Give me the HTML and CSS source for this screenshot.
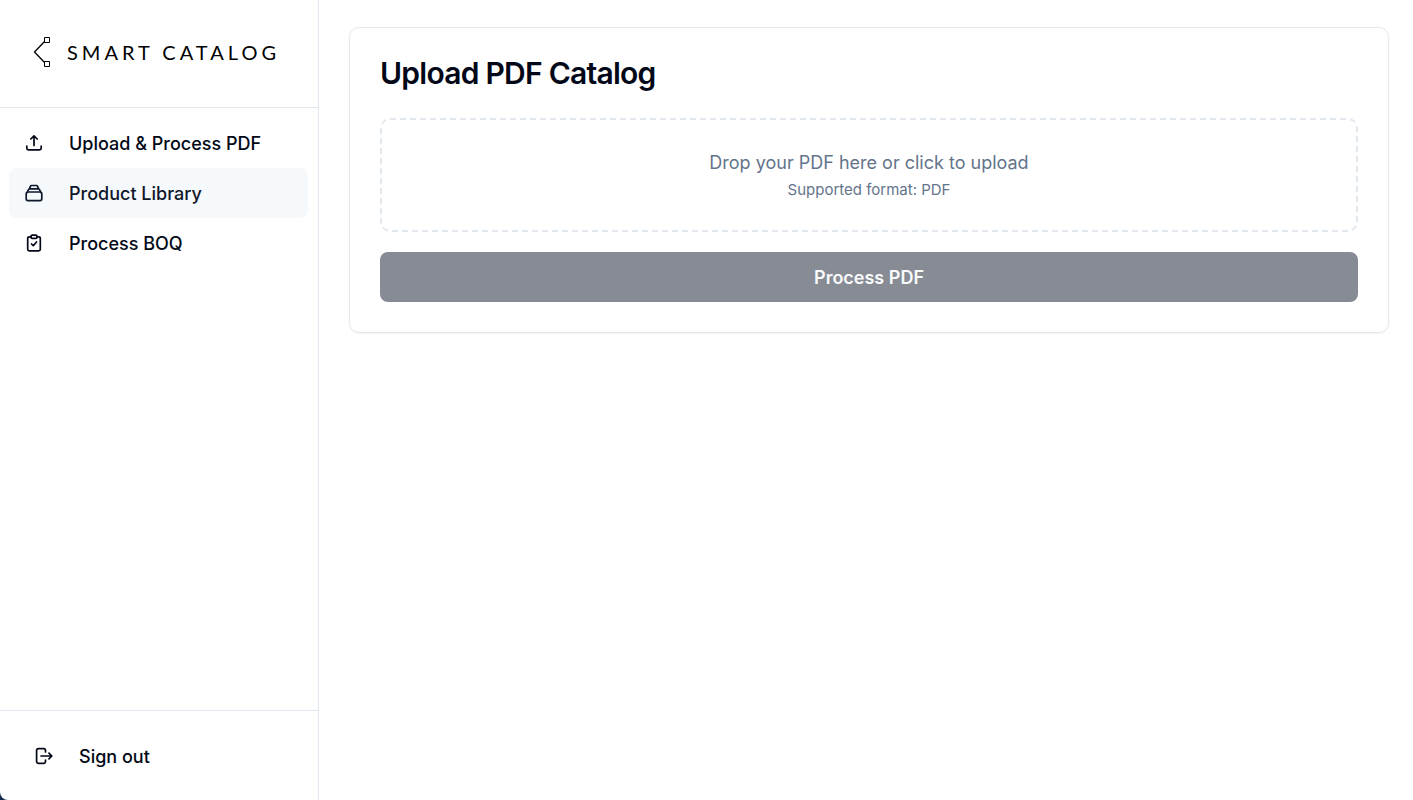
FILE: index.html
```html
<!DOCTYPE html>
<html lang="en">
<head>
<meta charset="utf-8">
<meta name="viewport" content="width=device-width, initial-scale=1">
<title>Smart Catalog</title>
<link rel="stylesheet" href="styles.css">
</head>
<body>
<div class="app">
  <aside class="sidebar">
    <div class="brand">
      <svg class="brand-mark" width="17" height="32" viewBox="0 0 17 32" fill="none" stroke="#000" aria-hidden="true">
        <path d="M11.500 5.500L1.500 16L11.500 26.500" stroke-width="1.300"/>
        <path d="M11.500 1.500h5v5h-5zM11.500 25.500h5v5h-5z"/>
      </svg>
      <span class="brand-name">SMART CATALOG</span>
    </div>
    <nav class="nav">
      <a class="nav-item" href="#upload">
        <svg class="icon" viewBox="0 0 18 18" aria-hidden="true"><path d="M9 11.500V2M5.800 5L9 1.800L12.200 5M1.800 12v2.200q0 1.600 1.600 1.600h11.200q1.600 0 1.600-1.600V12"/></svg>
        <span class="label">Upload &amp; Process PDF</span>
      </a>
      <a class="nav-item active" href="#library">
        <svg class="icon" viewBox="0 0 18 18" aria-hidden="true"><rect x="1.200" y="8" width="15.600" height="8.600" rx="1.800"/><path d="M2.100 8.500L3.500 5.600Q3.900 4.800 4.800 4.800h8.400q.9 0 1.300.8l1.400 2.900M4.600 4.600L5.400 2.400Q5.700 1.500 6.600 1.500h4.800q.9 0 1.200.9l.8 2.200"/></svg>
        <span class="label">Product Library</span>
      </a>
      <a class="nav-item" href="#boq">
        <svg class="icon" viewBox="0 0 18 18" aria-hidden="true"><path d="M6 2.800H4.300Q2.700 2.800 2.700 4.400v10.800q0 1.600 1.600 1.600h9.400q1.600 0 1.600-1.600V4.400q0-1.600-1.600-1.600H12M6.500 10l1.800 1.700L11.500 8"/><rect x="6" y="1.200" width="6" height="3.200" rx="1.200"/></svg>
        <span class="label">Process BOQ</span>
      </a>
    </nav>
    <div class="account">
      <button class="sign-out" type="button">
        <svg class="icon" viewBox="0 0 18 18" aria-hidden="true"><path d="M10.500 5V3.400q0-1.700-1.700-1.700H3.500q-1.900 0-1.900 1.900v10.800q0 1.900 1.900 1.900h5.300q1.700 0 1.700-1.700V13M6 9h10.800M14 6.200L16.800 9L14 11.800"/></svg>
        <span class="label">Sign out</span>
      </button>
    </div>
  </aside>
  <main class="content">
    <section class="card">
      <h1 class="title">Upload PDF Catalog</h1>
      <button class="dropzone" type="button">
        <span class="drop-main">Drop your PDF here or click to upload</span>
        <span class="drop-hint">Supported format: PDF</span>
      </button>
      <button class="process" type="button" disabled><span class="label">Process PDF</span></button>
    </section>
  </main>
</div>
</body>
</html>
```
FILE: styles.css
```css
* {
  box-sizing: border-box;
}

body {
  margin: 0;
  background: #0f294f;
  color: #020817;
  font-family: Inter, "Liberation Sans", sans-serif;
  font-size: 18px;
  line-height: 26px;
}

button {
  font: inherit;
  color: inherit;
}

.app {
  display: flex;
  min-height: 100vh;
  background: #fff;
  border-bottom-left-radius: 8px;
}

.sidebar {
  display: flex;
  flex-direction: column;
  flex: 0 0 319px;
  border-right: 1px solid #e2e8f0;
}

.brand {
  display: flex;
  align-items: center;
  gap: 17px;
  height: 108px;
  padding: 0 33px 4px;
  border-bottom: 1px solid #e2e8f0;
}

.brand-mark {
  flex: none;
}

.brand-name {
  color: #000;
  font-family: Lato, sans-serif;
  font-size: 20px;
  letter-spacing: 4px;
  white-space: nowrap;
}

.nav {
  flex: 1;
  padding: 10px 10px 10px 9px;
}

.nav-item {
  display: flex;
  align-items: center;
  gap: 26px;
  height: 50px;
  padding: 0 16px;
  border-radius: 8px;
  color: inherit;
  font-weight: 500;
  text-decoration: none;
}

.nav-item.active {
  background: #f5f9fc;
  color: #0f172a;
}

.label {
  display: block;
  padding-top: 2px;
}

.icon {
  flex: none;
  width: 18px;
  height: 18px;
  fill: none;
  stroke: currentColor;
  stroke-width: 1.7;
  stroke-linecap: round;
  stroke-linejoin: round;
}

.account {
  padding: 20px 20px 19px;
  border-top: 1px solid #e2e8f0;
}

.sign-out {
  display: flex;
  align-items: center;
  gap: 26px;
  width: 100%;
  height: 50px;
  padding: 0 15px;
  border: 0;
  background: none;
  font-weight: 500;
}

.content {
  flex: 1;
  min-width: 0;
  padding: 27px 24px 27px 30px;
}

.card {
  display: flex;
  flex-direction: column;
  gap: 20px;
  padding: 30px;
  border: 1px solid #e2e8f0;
  border-radius: 10px;
  box-shadow: 0 1px 2px rgba(0, 0, 0, 0.05);
}

.title {
  margin: 0 0 10px;
  font-size: 30px;
  font-weight: 600;
  line-height: 30px;
  letter-spacing: -0.025em;
}

.dropzone {
  display: flex;
  flex-direction: column;
  align-items: center;
  padding: 30px 30px 26px;
  border: 2px dashed #e2e8f0;
  border-radius: 10px;
  background: none;
  color: #64748b;
}

.drop-hint {
  font-size: 15px;
  line-height: 28px;
}

.process {
  height: 50px;
  border: 0;
  border-radius: 8px;
  background: #878b94;
  color: #f8fafc;
  font-weight: 600;
}
```
